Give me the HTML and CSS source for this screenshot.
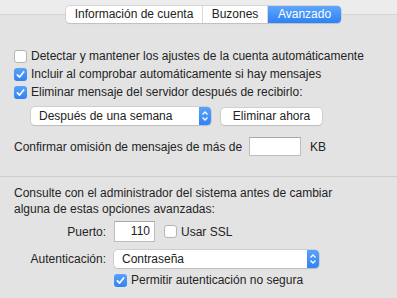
FILE: index.html
```html
<!DOCTYPE html>
<html lang="es">
<head>
    <meta charset="UTF-8">
    <title>Avanzado</title>
    <link rel="stylesheet" href="styles.css">
</head>
<body>
    <div class="header">
        <div class="tabs">
            <div class="tab">Información de cuenta</div>
            <div class="tab">Buzones</div>
            <div class="tab active">Avanzado</div>
        </div>
    </div>

    <div class="panel">
        <div class="check-row">
            <span class="box"></span>
            <span>Detectar y mantener los ajustes de la cuenta automáticamente</span>
        </div>
        <div class="check-row">
            <span class="box checked"><svg viewBox="0 0 14 14"><path d="M3.6 7.4 L6 9.8 L10.4 4.2" /></svg></span>
            <span>Incluir al comprobar automáticamente si hay mensajes</span>
        </div>
        <div class="check-row">
            <span class="box checked"><svg viewBox="0 0 14 14"><path d="M3.6 7.4 L6 9.8 L10.4 4.2" /></svg></span>
            <span>Eliminar mensaje del servidor después de recibirlo:</span>
        </div>

        <div class="action-row">
            <div class="select wide">
                <span class="select-text">Después de una semana</span>
                <span class="stepper"><svg viewBox="0 0 12 18"><path d="M3.5 7.5 L6 5 L8.5 7.5 M3.5 10.5 L6 13 L8.5 10.5" /></svg></span>
            </div>
            <div class="button">Eliminar ahora</div>
        </div>

        <div class="size-row">
            <span>Confirmar omisión de mensajes de más de</span>
            <span class="field size-field"></span>
            <span>KB</span>
        </div>
    </div>

    <div class="panel lower">
        <p class="note">Consulte con el administrador del sistema antes de cambiar alguna de estas opciones avanzadas:</p>

        <div class="form-grid">
            <span class="label">Puerto:</span>
            <div class="port-line">
                <span class="field port-field">110</span>
                <span class="box"></span>
                <span>Usar SSL</span>
            </div>

            <span class="label">Autenticación:</span>
            <div class="select auth">
                <span class="select-text">Contraseña</span>
                <span class="stepper"><svg viewBox="0 0 12 18"><path d="M3.5 7.5 L6 5 L8.5 7.5 M3.5 10.5 L6 13 L8.5 10.5" /></svg></span>
            </div>

            <span></span>
            <div class="check-row tight">
                <span class="box checked"><svg viewBox="0 0 14 14"><path d="M3.6 7.4 L6 9.8 L10.4 4.2" /></svg></span>
                <span>Permitir autenticación no segura</span>
            </div>
        </div>
    </div>
</body>
</html>
```

FILE: styles.css
```css
body {
    margin: 0;
    background: #e3e3e3;
    font-family: 'Liberation Sans', Arial, sans-serif;
    font-size: 12px;
    color: #232323;
    width: 397px;
    height: 298px;
    overflow: hidden;
}
.header {
    display: flex;
    justify-content: center;
    padding: 6px 0 0 10px;
    height: 24px;
    background: linear-gradient(#ececec 0, #ececec 14px, #d5d5d5 14px, #d5d5d5 15px, #e3e3e3 15px);
}
.tabs {
    display: flex;
    height: 17px;
    border-radius: 4px;
    box-shadow: 0 0 0 0.5px #bdbdbd, 0 1px 1px rgba(0, 0, 0, 0.15);
    background: #ffffff;
    overflow: hidden;
}
.tab {
    box-sizing: border-box;
    text-align: center;
    line-height: 17px;
    border-right: 1px solid #d8d8d8;
    white-space: nowrap;
}
.tab:first-child {
    width: 137px;
}
.tab:nth-child(2) {
    width: 65px;
}
.tab.active {
    border-right: none;
    width: 73px;
    color: #ffffff;
    background: linear-gradient(#5fa5fa, #2d82f6);
}
.panel {
    padding: 17px 0 0 14px;
}
.check-row {
    display: flex;
    align-items: center;
    gap: 4px;
    height: 18px;
}
.box {
    width: 13px;
    height: 13px;
    box-sizing: border-box;
    border: 1px solid #b4b4b4;
    border-radius: 3px;
    background: #ffffff;
    flex: none;
}
.box.checked {
    border: none;
    background: linear-gradient(#5aa2fa, #2f83f6);
}
.box svg {
    width: 13px;
    height: 13px;
    display: block;
}
.box svg path {
    fill: none;
    stroke: #ffffff;
    stroke-width: 1.8;
    stroke-linecap: round;
    stroke-linejoin: round;
}
.action-row {
    display: flex;
    gap: 10px;
    margin: 6px 0 0 17px;
}
.select {
    display: flex;
    height: 18px;
    background: #ffffff;
    border-radius: 4px;
    box-shadow: 0 0 0 0.5px #bcbcbc, 0 1px 1px rgba(0, 0, 0, 0.15);
    overflow: hidden;
}
.select.wide {
    width: 180px;
}
.select-text {
    flex: 1;
    line-height: 18px;
    padding-left: 8px;
}
.stepper {
    width: 12px;
    background: linear-gradient(#5aa2fa, #2f83f6);
}
.stepper svg {
    width: 12px;
    height: 18px;
    display: block;
}
.stepper svg path {
    fill: none;
    stroke: #ffffff;
    stroke-width: 1.3;
}
.button {
    width: 101px;
    height: 17px;
    line-height: 17px;
    text-align: center;
    background: #ffffff;
    border-radius: 4px;
    box-shadow: 0 0 0 0.5px #bcbcbc, 0 1px 1px rgba(0, 0, 0, 0.15);
    margin-top: 1px;
}
.size-row {
    display: flex;
    align-items: center;
    margin-top: 12px;
}
.field {
    display: block;
    box-sizing: border-box;
    background: #ffffff;
    border: 1px solid #bdbdbd;
    border-top-color: #a8a8a8;
}
.size-field {
    width: 52px;
    height: 19px;
    margin: 0 9px 0 7px;
}
.lower {
    margin-top: 20px;
    border-top: 1px solid #cdcdcd;
    padding-top: 8px;
}
.note {
    margin: 0;
    width: 340px;
    line-height: 16px;
}
.form-grid {
    display: grid;
    grid-template-columns: 92px auto;
    column-gap: 8px;
    row-gap: 8px;
    margin-top: 4px;
    align-items: center;
}
.label {
    text-align: right;
}
.port-line {
    display: flex;
    align-items: center;
    gap: 4px;
}
.port-field {
    width: 41px;
    height: 21px;
    line-height: 19px;
    text-align: right;
    padding-right: 4px;
    margin-right: 5px;
}
.select.auth {
    width: 205px;
}
.check-row.tight {
    margin-top: -5px;
}
```
